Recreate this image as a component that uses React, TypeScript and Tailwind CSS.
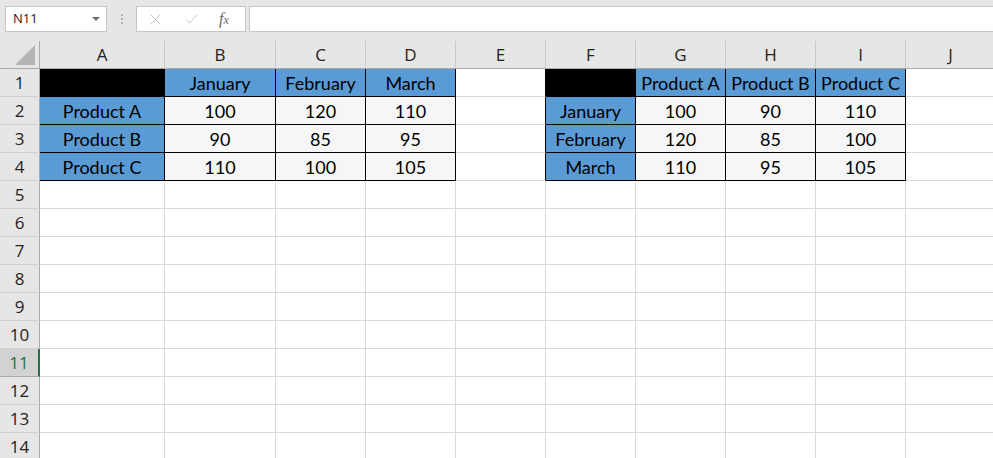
import { Check, X } from "lucide-react";

const COLS = ["A", "B", "C", "D", "E", "F", "G", "H", "I", "J"];
const ROWS = Array.from({ length: 14 }, (_, i) => i + 1);

// values by row (1-4) and column index (0 = A)
const DATA: Record<number, (string | null)[]> = {
  1: [null, "January", "February", "March", "", null, "Product A", "Product B", "Product C", ""],
  2: ["Product A", "100", "120", "110", "", "January", "100", "90", "110", ""],
  3: ["Product B", "90", "85", "95", "", "February", "120", "85", "100", ""],
  4: ["Product C", "110", "100", "105", "", "March", "110", "95", "105", ""],
};

const inTable = (r: number, c: number) =>
  r >= 1 && r <= 4 && ((c >= 0 && c <= 3) || (c >= 5 && c <= 8));

function cellClass(r: number, c: number) {
  if (!inTable(r, c)) {
    // column E sits left of the second table, so its right edge is black there
    if (c === 4 && r <= 4) return "bg-white border-r border-b border-r-black border-b-[#d9d9d9]";
    return "bg-white border-r border-b border-[#d9d9d9]";
  }
  const isBlack = r === 1 && (c === 0 || c === 5);
  const isBlue = r === 1 || c === 0 || c === 5;
  const bg = isBlack ? "bg-black" : isBlue ? "bg-[#5b9bd5]" : "bg-[#f6f6f6]";
  return `${bg} border-r border-b border-black`;
}

function Toolbar() {
  return (
    <div className="h-[41px] bg-[#e6e6e6] flex items-start pt-[6px] pl-[5px]">
      <div className="w-[102px] h-[26px] bg-white border border-[#c6c6c6] flex items-center justify-between pl-[7px] pr-[6px]">
        <span className="text-[13px] text-[#222] font-['Open_Sans',sans-serif]">N11</span>
        <span className="w-0 h-0 border-l-[4px] border-r-[4px] border-t-[4px] border-l-transparent border-r-transparent border-t-[#6f6f6f]" />
      </div>
      <div className="ml-[14px] mt-[8px] flex flex-col gap-[2px]">
        <span className="w-[2px] h-[2px] bg-[#b0b0b0]" />
        <span className="w-[2px] h-[2px] bg-[#b0b0b0]" />
        <span className="w-[2px] h-[2px] bg-[#b0b0b0]" />
      </div>
      <div className="ml-[13px] w-[110px] h-[26px] bg-white border border-[#c6c6c6] flex items-center">
        <X size={17} strokeWidth={1.4} className="text-[#c2c2c2] ml-[10px]" />
        <Check size={17} strokeWidth={1.4} className="text-[#c2c2c2] ml-[19px]" />
        <span className="ml-[19px] italic text-[#666] text-[16px] font-['Liberation_Serif',serif] leading-none">
          f<span className="text-[12px]">x</span>
        </span>
      </div>
      <div className="ml-[3px] flex-1 -mr-[4px] h-[26px] bg-white border border-[#c6c6c6]" />
    </div>
  );
}

function App() {
  return (
    <div className="w-[993px] h-[458px] overflow-hidden bg-white">
      <Toolbar />
      <div className="grid grid-cols-[40px_125px_111px_90px_90px_90px_90px_90px_90px_90px_90px_90px] auto-rows-[28px] w-[1100px]">
        {/* header row */}
        <div className="bg-[#e6e6e6] border-r border-b border-[#ababab] relative">
          <svg width="20" height="20" className="absolute right-[4px] bottom-[3px]">
            <polygon points="20,0 20,20 0,20" fill="#b4b4b4" />
          </svg>
        </div>
        {COLS.map((c) => (
          <div
            key={c}
            className="bg-[#e6e6e6] border-r border-b border-r-[#c8c8c8] border-b-[#ababab] flex items-center justify-center pt-[1px] text-[17px] text-[#222] font-['Open_Sans',sans-serif]"
          >
            {c}
          </div>
        ))}
        <div className="bg-[#e6e6e6] border-b border-[#ababab]" />

        {ROWS.map((r) => (
          <div key={r} className="contents">
            <div
              className={
                r === 11
                  ? "bg-[#d2d2d2] border-b border-[#ababab] border-r-2 border-r-[#217346] text-[#217346] flex items-center justify-center pt-[1px] text-[17px] font-['Open_Sans',sans-serif]"
                  : "bg-[#e6e6e6] border-r border-b border-r-[#ababab] border-b-[#d0d0d0] text-[#222] flex items-center justify-center pt-[1px] text-[17px] font-['Open_Sans',sans-serif]"
              }
            >
              {r}
            </div>
            {COLS.map((_, c) => (
              <div
                key={c}
                className={`${cellClass(r, c)} flex items-center justify-center pt-[2px] text-[18px] text-black font-['Lato',sans-serif] whitespace-nowrap overflow-hidden`}
              >
                {DATA[r]?.[c] ?? ""}
              </div>
            ))}
            <div className="bg-white border-b border-[#d9d9d9]" />
          </div>
        ))}
      </div>
    </div>
  );
}

export default App;
